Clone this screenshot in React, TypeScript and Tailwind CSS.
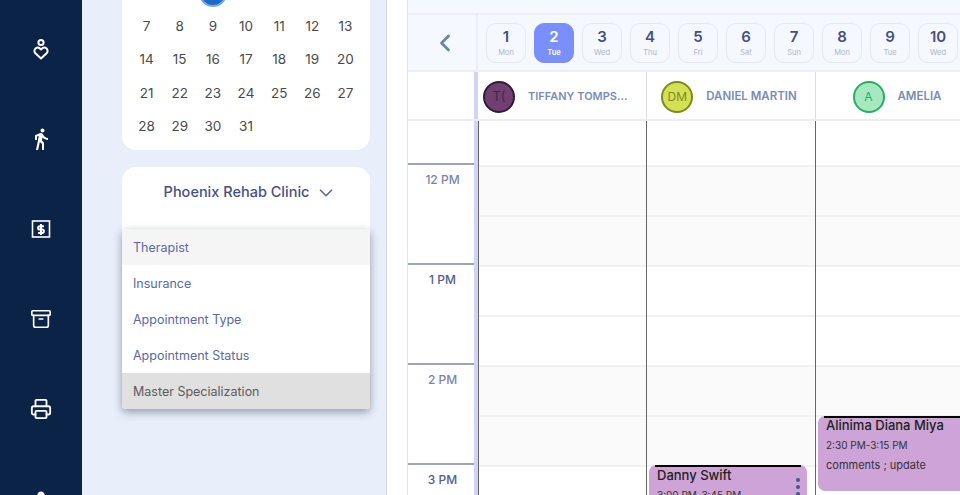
import { Archive, ChevronDown, ChevronLeft, Printer } from "lucide-react";
import { MdDirectionsWalk, MdGroups } from "react-icons/md";

const calendarRows = [
  ["", "", "2", "", "", "", ""],
  ["7", "8", "9", "10", "11", "12", "13"],
  ["14", "15", "16", "17", "18", "19", "20"],
  ["21", "22", "23", "24", "25", "26", "27"],
  ["28", "29", "30", "31", "", "", ""],
];

const dates = [
  ["1", "Mon"],
  ["2", "Tue"],
  ["3", "Wed"],
  ["4", "Thu"],
  ["5", "Fri"],
  ["6", "Sat"],
  ["7", "Sun"],
  ["8", "Mon"],
  ["9", "Tue"],
  ["10", "Wed"],
];

const menuItems = ["Therapist", "Insurance", "Appointment Type", "Appointment Status", "Master Specialization"];

const HeartPerson = () => (
  <svg viewBox="0 0 24 24" className="h-6 w-6" fill="none" stroke="white" strokeWidth="2" strokeLinejoin="round">
    <circle cx="12" cy="5.5" r="2.6" />
    <path d="M12 21.5 6.4 16.2a3.2 3.2 0 0 1 0-4.6 3.4 3.4 0 0 1 4.4-.2L12 12.4l1.2-1a3.4 3.4 0 0 1 4.4.2 3.2 3.2 0 0 1 0 4.6Z" />
  </svg>
);

const MoneyBox = () => (
  <svg viewBox="0 0 24 24" className="h-6 w-6" fill="none" stroke="white" strokeWidth="2">
    <rect x="3.5" y="4" width="17" height="16" strokeWidth="1.6" />
    <path d="M15 9.2h-4.2a1.7 1.7 0 0 0 0 3.4h2.4a1.7 1.7 0 0 1 0 3.4H9" />
    <path d="M12 7v11" />
  </svg>
);

function Row({ shaded, h }: { shaded: boolean; h: string }) {
  return <div className={`${h} border-b-2 border-[#f2f2f2] ${shaded ? "bg-[#fafafa]" : "bg-white"}`} />;
}

function DayColumn({ w, children }: { w: string; children?: React.ReactNode }) {
  return (
    <div className={`relative ${w} shrink-0 border-l border-[#666]`}>
      <Row h="h-[46px]" shaded={false} />
      <Row h="h-[50px]" shaded />
      <Row h="h-[50px]" shaded />
      <Row h="h-[50px]" shaded={false} />
      <Row h="h-[50px]" shaded={false} />
      <Row h="h-[50px]" shaded />
      <Row h="h-[50px]" shaded />
      <Row h="h-[50px]" shaded={false} />
      {children}
    </div>
  );
}

function TimeBlock({ label, dark }: { label: string; dark?: boolean }) {
  return (
    <div className="h-[100px] border-t-2 border-[#9ca5bf] pt-[6px] pl-[3px] text-center">
      <span className={`block text-[12px] leading-[18px] font-medium ${dark ? "text-[#535d85]" : "text-[#7b84a6]"}`}>{label}</span>
    </div>
  );
}

export default function App() {
  return (
    <div className="flex h-[495px] w-[960px] overflow-hidden bg-white font-['Inter',sans-serif]">
      {/* sidebar */}
      <div className="flex w-[82px] shrink-0 flex-col items-center bg-[#0c2348] pt-[4px] text-white">
        <div className="flex h-[90px] shrink-0 items-center justify-center">
          <HeartPerson />
        </div>
        <div className="flex h-[90px] shrink-0 items-center justify-center">
          <MdDirectionsWalk size={24} />
        </div>
        <div className="flex h-[90px] shrink-0 items-center justify-center">
          <MoneyBox />
        </div>
        <div className="flex h-[90px] shrink-0 items-center justify-center">
          <Archive size={22} strokeWidth={1.8} />
        </div>
        <div className="flex h-[90px] shrink-0 items-center justify-center">
          <Printer size={22} strokeWidth={2} />
        </div>
        <div className="flex h-[90px] shrink-0 items-center justify-center">
          <MdGroups size={30} />
        </div>
      </div>

      {/* calendar + clinic filter */}
      <div className="w-[305px] shrink-0 border-r border-[#ccd5ee] bg-[#e8effa] pr-[16px] pl-[40px]">
        <div className="-mt-[24px] rounded-[14px] bg-white px-[8px] pb-[7px]">
          {calendarRows.map((row, i) => (
            <div key={i} className="grid h-[33.4px] grid-cols-7">
              {row.map((d, j) => (
                <div key={j} className="flex items-center justify-center text-[13.5px] text-[#4a4a4a]">
                  {d === "2" ? (
                    <span className="block h-[28px] w-[28px] rounded-full border-2 border-[#7fa6dd] bg-[#1a6bc9]" />
                  ) : (
                    d
                  )}
                </div>
              ))}
            </div>
          ))}
        </div>

        <div className="relative mt-[17px] h-[80px] rounded-[14px] bg-white">
          <div className="flex h-[50px] items-center justify-center gap-[6px] pl-[9px] text-[#45507f]">
            <span className="text-[14.5px] font-medium">Phoenix Rehab Clinic</span>
            <ChevronDown size={22} strokeWidth={1.8} className="mt-[2px] text-[#5f6b92]" />
          </div>
          <div className="absolute top-[62px] right-0 left-0 overflow-hidden rounded-[4px] bg-white shadow-[0_3px_8px_rgba(40,50,80,0.45)]">
            {menuItems.map((item, i) => (
              <div
                key={item}
                className={`flex h-[36px] items-center px-[11px] pt-[2px] text-[12.5px] ${
                  i === 0 ? "bg-[#f5f5f5] text-[#5b6a9b]" : i === 4 ? "bg-[#e0e0e0] text-[#5c5c5c]" : "text-[#5b6a9b]"
                }`}
              >
                {item}
              </div>
            ))}
          </div>
        </div>
      </div>

      {/* schedule */}
      <div className="min-w-0 flex-1 pl-[20px]">
        <div className="h-full overflow-hidden border-l border-[#e5e5e5]">
          <div className="box-content h-[13px] border-b-2 border-[#eeeef2] bg-[#f5f8ff]" />

          <div className="box-content flex h-[55px] border-b-2 border-[#eeeef2] bg-[#f5f8ff]">
            <div className="flex w-[70px] shrink-0 items-center justify-center border-r-2 border-[#eeeef2] pl-[6px] text-[#6b82ab]">
              <ChevronLeft size={28} strokeWidth={2.4} />
            </div>
            <div className="flex items-center gap-[8px] pl-[8px]">
              {dates.map(([n, d]) => (
                <div
                  key={n}
                  className={`flex h-[40px] w-[40px] shrink-0 flex-col items-center rounded-[10px] border pt-[3px] ${
                    n === "2" ? "border-[#7b8ffb] bg-[#7b8ffb] text-white" : "border-[#e4e8f0] text-[#46507f]"
                  }`}
                >
                  <span className="text-[15px] leading-[20px] font-semibold">{n}</span>
                  <span className={`mt-[1px] text-[7.5px] leading-[10px] ${n === "2" ? "font-semibold" : "text-[#aeb6c8]"}`}>{d}</span>
                </div>
              ))}
            </div>
          </div>

          <div className="box-content flex h-[47px] border-b-2 border-[#eeeef2]">
            <div className="w-[66px] shrink-0" />
            <div className="w-[4px] shrink-0 bg-[#cfd5f7]" />
            <div className="flex w-[168px] shrink-0 items-center gap-[13px] pt-[2px] pl-[5px]">
              <span className="flex h-[32px] w-[32px] shrink-0 items-center justify-center rounded-full border-2 border-[#2f1c38] bg-[#713f71] text-[13px] text-[#3b2a4c]">
                T(
              </span>
              <span className="text-[11px] font-semibold whitespace-nowrap text-[#7d8cb0]">TIFFANY TOMPS...</span>
            </div>
            <div className="flex w-[169px] shrink-0 items-center justify-center gap-[13px] border-l border-[#dddddd] pt-[2px] pr-[4px]">
              <span className="flex h-[32px] w-[32px] shrink-0 items-center justify-center rounded-full border-2 border-[#7d8a1e] bg-[#d4e157] text-[12px] text-[#7d8a1e]">
                DM
              </span>
              <span className="text-[11.5px] font-semibold text-[#7d8cb0]">DANIEL MARTIN</span>
            </div>
            <div className="flex w-[169px] shrink-0 items-center justify-center gap-[13px] border-l border-[#dddddd] pt-[2px] pr-[6px]">
              <span className="flex h-[32px] w-[32px] shrink-0 items-center justify-center rounded-full border-2 border-[#27ae60] bg-[#a8e8c0] text-[12px] text-[#27ae60]">
                A
              </span>
              <span className="text-[11.5px] font-semibold text-[#7d8cb0]">AMELIA</span>
            </div>
          </div>

          <div className="flex">
            <div className="w-[66px] shrink-0 pt-[42px]">
              <TimeBlock label="12 PM" />
              <TimeBlock label="1 PM" dark />
              <TimeBlock label="2 PM" />
              <TimeBlock label="3 PM" dark />
            </div>
            <div className="w-[4px] shrink-0 bg-[#cfd5f7]" />
            <DayColumn w="w-[168px]" />
            <DayColumn w="w-[169px]">
              <div className="absolute top-[344px] right-[8px] left-[2px] h-[60px] rounded-[7px] bg-[#cda3d8] px-[8px] pt-[1px]">
                <div className="absolute top-0 right-[6px] left-[6px] h-[2px] bg-black" />
                <div className="text-[13px] leading-[18px] font-medium text-[#222]">Danny Swift</div>
                <div className="mt-[3px] text-[10px] leading-[16px] text-[#333]">3:00 PM-3:45 PM</div>
                <div className="absolute top-[13px] right-[7px] flex flex-col gap-[3px]">
                  <span className="h-[4px] w-[4px] rounded-full bg-[#3e5a8a]" />
                  <span className="h-[4px] w-[4px] rounded-full bg-[#3e5a8a]" />
                  <span className="h-[4px] w-[4px] rounded-full bg-[#3e5a8a]" />
                </div>
              </div>
            </DayColumn>
            <DayColumn w="w-[169px]">
              <div className="absolute top-[295px] right-0 left-[2px] h-[75px] rounded-[7px] bg-[#cda3d8] px-[8px]">
                <div className="absolute top-0 right-0 left-[6px] h-[2px] bg-black" />
                <div className="text-[13px] leading-[18px] font-medium text-[#222]">Alinima Diana Miya</div>
                <div className="mt-[3px] text-[10px] leading-[16px] text-[#333]">2:30 PM-3:15 PM</div>
                <div className="mt-[4px] text-[11px] leading-[16px] text-[#333]">comments ; update</div>
              </div>
            </DayColumn>
          </div>
        </div>
      </div>
    </div>
  );
}
